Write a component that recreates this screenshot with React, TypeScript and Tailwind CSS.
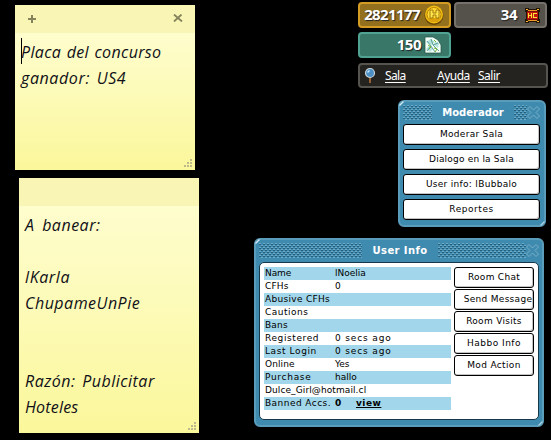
import React from "react";

const pixelFont = "font-['DejaVu_Sans','Liberation_Sans',sans-serif] text-[9px]";
const barFont = "font-['Noto_Sans','Open_Sans',sans-serif]";

function Grip() {
  return (
    <svg className="absolute bottom-[3px] right-[3px]" width="8" height="8" fill="#bdb98a" shapeRendering="crispEdges">
      <path d="M6 0h2v2h-2zM6 3h2v2h-2zM3 3h2v2h-2zM6 6h2v2h-2zM3 6h2v2h-2zM0 6h2v2h-2z" />
    </svg>
  );
}

function Note({ place, tools, children }: { place: string; tools?: boolean; children: React.ReactNode }) {
  return (
    <section className={`absolute flex w-[180px] flex-col ${place}`}>
      <header className="flex h-7 shrink-0 items-center justify-between bg-[#f8f5b5] pl-[13px] pr-3">
        {tools && (
          <>
            <svg width="8" height="8" stroke="#85835b" strokeWidth="2"><path d="M4 0v8M0 4h8" /></svg>
            <svg className="-mt-0.5" width="10" height="8" stroke="#85835b" strokeWidth="1.800"><path d="M1 .5l8 7M8.500 .5L1 7.500" /></svg>
          </>
        )}
      </header>
      <div className="relative flex-1 whitespace-nowrap bg-linear-to-b from-[#fefdcd] to-[#fbf79b] pl-1.5 pt-1.5 font-['Open_Sans','Noto_Sans',sans-serif] text-[16px] font-normal italic leading-[26px] text-[#101018]">
        {children}
        <Grip />
      </div>
    </section>
  );
}

function Coin() {
  return (
    <svg width="20" height="20" viewBox="0 0 20 20">
      <circle cx="10" cy="10.500" r="9.500" fill="#684604" />
      <circle cx="10" cy="9.500" r="9" fill="#f2bd13" />
      <circle cx="10" cy="9.500" r="7" fill="#ffda32" stroke="#b78207" />
      <path d="M4 13l3 4h7l3-4z" fill="#dca00b" />
      <path d="M6 5h3v3h3V5h3v8h-3v-3H9v3H6z" fill="#ffe54c" stroke="#8d6406" strokeWidth=".8" />
    </svg>
  );
}

function Club() {
  return (
    <svg className="shrink-0" width="15" height="15" shapeRendering="crispEdges">
      <path d="M0 0h4v1h7V0h4v4h-1v7h1v4h-4v-1H4v1H0v-4h1V4H0z" fill="#241405" />
      <path d="M3 2h9v1h1v9h-1v1H3v-1H2V3h1z" fill="#7d0b08" />
      <path d="M3 2h9v1H3zM3 12h9v1H3z" fill="#ee9a22" />
      <path d="M1 1h2v1H1zM12 1h2v1h-2zM1 13h2v1H1zM12 13h2v1h-2z" fill="#f6b830" />
      <path d="M2 4h11v7H2z" fill="#c0140c" />
      <path d="M3 5h1v2h2V5h1v5H6V8H4v2H3zM8 5h4v1H9v3h3v1H8z" fill="#ffe236" />
    </svg>
  );
}

function Gem() {
  return (
    <svg width="18" height="18" viewBox="0 0 18 18">
      <path d="M1 1h8l5 3 3 5v8H1z" fill="#f2fff6" stroke="#1f4d44" strokeWidth=".7" />
      <path d="M2 6l5-3 4 3-4 3zM11 6l4 1-1 5-4-3zM2 13l4-4 3 4-3 3z" fill="#b5e2dc" />
      <path d="M3 5l4 5-4 5M7 3l2 6 5-2M7 10l4 6M9 9l6 6" stroke="#3f8b86" strokeWidth=".8" fill="none" />
      <path d="M4 9l3 2-2 2M10 12l3 1-2 3M10 4l2 2" stroke="#79b52c" fill="none" />
    </svg>
  );
}

function Lens() {
  return (
    <svg width="12" height="16" viewBox="0 0 12 16">
      <path d="M6 9v6" stroke="#b0703a" strokeWidth="1.600" />
      <circle cx="6" cy="5" r="4.500" fill="#4b8fc4" stroke="#c9d0d3" strokeWidth="1.200" />
      <path d="M3.500 4.500L5.500 2.500" stroke="#c2e8ff" strokeWidth="1.500" />
    </svg>
  );
}

function Dots({ className, id }: { className: string; id: string }) {
  return (
    <svg className={`shrink-0 ${className}`} height="15" shapeRendering="crispEdges">
      <defs>
        <pattern id={id} width="4" height="4" patternUnits="userSpaceOnUse">
          <path d="M0 0h2v1H0zM2 2h2v1H2z" fill="#6cabc8" />
          <path d="M0 1h2v1H0zM2 3h2v1H2z" fill="#275f7a" />
        </pattern>
      </defs>
      <rect width="100%" height="15" fill={`url(#${id})`} />
    </svg>
  );
}

function CloseX() {
  return (
    <svg className="mt-px shrink-0" width="13" height="13" viewBox="0 0 13 13" fill="none" stroke="#78adc6">
      <path d="M3 .5L6.500 4 10 .5 12.500 3 9 6.500 12.500 10 10 12.500 6.500 9 3 12.500.5 10 4 6.500.5 3z" />
    </svg>
  );
}

function Glints() {
  return (
    <>
      <svg className="absolute -left-px -top-px" width="6" height="6" stroke="#d4ebf5" strokeWidth="1.200">
        <path d="M.5 4.500L4.500 .5" />
      </svg>
      <svg className="absolute -bottom-px -right-px" width="6" height="6" stroke="#a6d2e4" strokeWidth="1.200">
        <path d="M1.500 5.500L5.500 1.500" />
      </svg>
    </>
  );
}

const frame = "absolute flex flex-col rounded-[6px] border-2 border-[#5a9dbb] bg-[#3f8baf] " + pixelFont;

function Action({ label, className }: { label: string; className: string }) {
  return (
    <button className={`flex shrink-0 items-center justify-center whitespace-nowrap rounded-[3px] border border-black bg-white text-black shadow-[inset_-1px_-1px_0_#c4c4c4] ${className}`}>
      {label}
    </button>
  );
}

const rows = [
  { name: "Name", value: "lNoelia", spacing: "tracking-[-0.1px]" },
  { name: "CFHs", value: "0", spacing: "tracking-[0.2px]" },
  { name: "Abusive CFHs", value: "", spacing: "tracking-[0.3px]" },
  { name: "Cautions", value: "", spacing: "tracking-[0.5px]" },
  { name: "Bans", value: "", spacing: "tracking-[0.2px]" },
  { name: "Registered", value: "0 secs ago", spacing: "tracking-[0.6px]" },
  { name: "Last Login", value: "0 secs ago", spacing: "tracking-[0.6px]" },
  { name: "Online", value: "Yes", spacing: "tracking-[0.1px]" },
  { name: "Purchase", value: "hallo", spacing: "tracking-[0.7px]" },
  { name: "Dulce_Girl@hotmail.cl", value: "", spacing: "tracking-[0.1px]" },
];

export default function App() {
  return (
    <main className="relative h-[440px] w-[551px] overflow-hidden bg-black">
      <Note place="left-[15px] top-[5px] h-[165px]" tools>
        <i className="absolute left-1.5 top-[5px] h-[26px] w-px bg-black" />
        <p className="tracking-[0.35px] [word-spacing:1px]">Placa del concurso</p>
        <p className="tracking-[0.6px] [word-spacing:2px]">ganador: US4</p>
      </Note>
      <Note place="left-[19px] top-[178px] h-[255px]">
        <p className="tracking-[0.5px] [word-spacing:3px]">A banear:</p>
        <p className="mt-[26px] tracking-[0.6px]">lKarla</p>
        <p className="tracking-[0.5px]">ChupameUnPie</p>
        <p className="mt-[52px] tracking-[0.5px] [word-spacing:2px]">Razón: Publicitar</p>
        <p className="tracking-[0.2px]">Hoteles</p>
      </Note>

      <div className={`absolute left-[358px] top-[2px] grid w-[190px] grid-cols-[93px_93px] gap-x-[3px] gap-y-1 ${barFont}`}>
        <div className="flex h-[26px] items-center justify-end gap-1 rounded-[4px] border-2 border-[#d59c24] bg-[#92701d] pr-[5px] text-[15px] font-bold tracking-[-0.6px] text-white [text-shadow:1px_1px_1px_#222]">
          <span className="-mt-0.5">2821177</span> <Coin />
        </div>
        <div className="flex h-[26px] items-center justify-end gap-2 rounded-[4px] border-2 border-[#76716a] bg-[#55524b] pr-[5px] text-[15px] font-bold tracking-[-0.5px] text-white [text-shadow:1px_1px_1px_#222]">
          <span className="-mt-0.5">34</span> <Club />
        </div>
        <div className="flex h-[26px] items-center justify-end gap-[3px] rounded-[4px] border-2 border-[#50a393] bg-[#397869] pr-[7px] text-[15px] font-bold tracking-[-0.5px] text-white [text-shadow:1px_1px_1px_#222]">
          <span className="-mt-0.5">150</span> <Gem />
        </div>
        <nav className="col-span-2 mt-px flex h-[25px] w-[190px] items-center rounded-[4px] border-2 border-[#55544f] bg-[#24231f] pl-1 text-[12px] text-white">
          <Lens />
          <a className="ml-[9px] w-[52px] tracking-[-0.6px] underline underline-offset-2">Sala</a>
          <a className="w-[41px] tracking-[-0.5px] underline underline-offset-2">Ayuda</a>
          <a className="tracking-[-0.5px] underline underline-offset-2">Salir</a>
        </nav>
      </div>

      <section className={`${frame} left-[398px] top-[100px] h-[127px] w-[148px] px-[3px]`}>
        <Glints />
        <header className="flex h-[22px] shrink-0 items-start pr-px pt-[3px]">
          <Dots id="modLeft" className="w-[29px]" />
          <h2 className="flex-1 text-center text-[10px] font-bold leading-[15px] text-white">Moderador</h2>
          <Dots id="modRight" className="w-[13px]" />
          <CloseX />
        </header>
        <div className="flex flex-col gap-1">
          <Action label="Moderar Sala" className="h-[21px] w-[137px] tracking-[0.3px]" />
          <Action label="Dialogo en la Sala" className="h-[21px] w-[137px] tracking-[0.2px]" />
          <Action label="User info: lBubbalo" className="h-[21px] w-[137px] tracking-[0.3px]" />
          <Action label="Reportes" className="h-[21px] w-[137px] tracking-[0.55px]" />
        </div>
      </section>

      <section className={`${frame} left-[254px] top-[238px] h-[189px] w-[290px] px-[3px]`}>
        <Glints />
        <header className="flex h-[22px] shrink-0 items-start pt-[3px]">
          <Dots id="infoLeft" className="w-[103px]" />
          <h2 className="flex-1 text-center text-[10px] font-bold leading-[15px] tracking-[0.4px] text-white">User Info</h2>
          <Dots id="infoRight" className="w-[88px]" />
          <CloseX />
        </header>
        <div className="flex h-[158px] w-[280px] gap-[3px] rounded-[5px] border border-[#17384a] bg-white pl-1 pt-1">
          <div className="flex w-[187px] flex-col text-black">
            {rows.map(({ name, value, spacing }, i) => (
              <div key={name} className={`flex h-[13px] shrink-0 items-center whitespace-nowrap pl-px ${i % 2 ? "" : "bg-[#a2d6ea]"}`}>
                <span className={`w-[70px] ${spacing}`}>{name}</span>
                <span className={value.includes("ago") ? "tracking-[0.85px]" : ""}>{value}</span>
              </div>
            ))}
            <div className="flex h-[13px] items-center whitespace-nowrap bg-[#a2d6ea] pl-px">
              <span className="w-[70px] tracking-[0.45px]">Banned Accs.</span>
              <b className="w-[21px]">0</b>
              <b className="tracking-[0.5px] underline">view</b>
            </div>
          </div>
          <div className="flex flex-col gap-px">
            <Action label="Room Chat" className="h-[21px] w-20 tracking-[0.3px]" />
            <Action label="Send Message" className="h-[21px] w-20 pl-2 tracking-[0.3px]" />
            <Action label="Room Visits" className="h-[21px] w-20 tracking-[0.3px]" />
            <Action label="Habbo Info" className="h-[21px] w-20 tracking-[0.5px]" />
            <Action label="Mod Action" className="h-[21px] w-20 tracking-[0.35px]" />
          </div>
        </div>
      </section>
    </main>
  );
}
